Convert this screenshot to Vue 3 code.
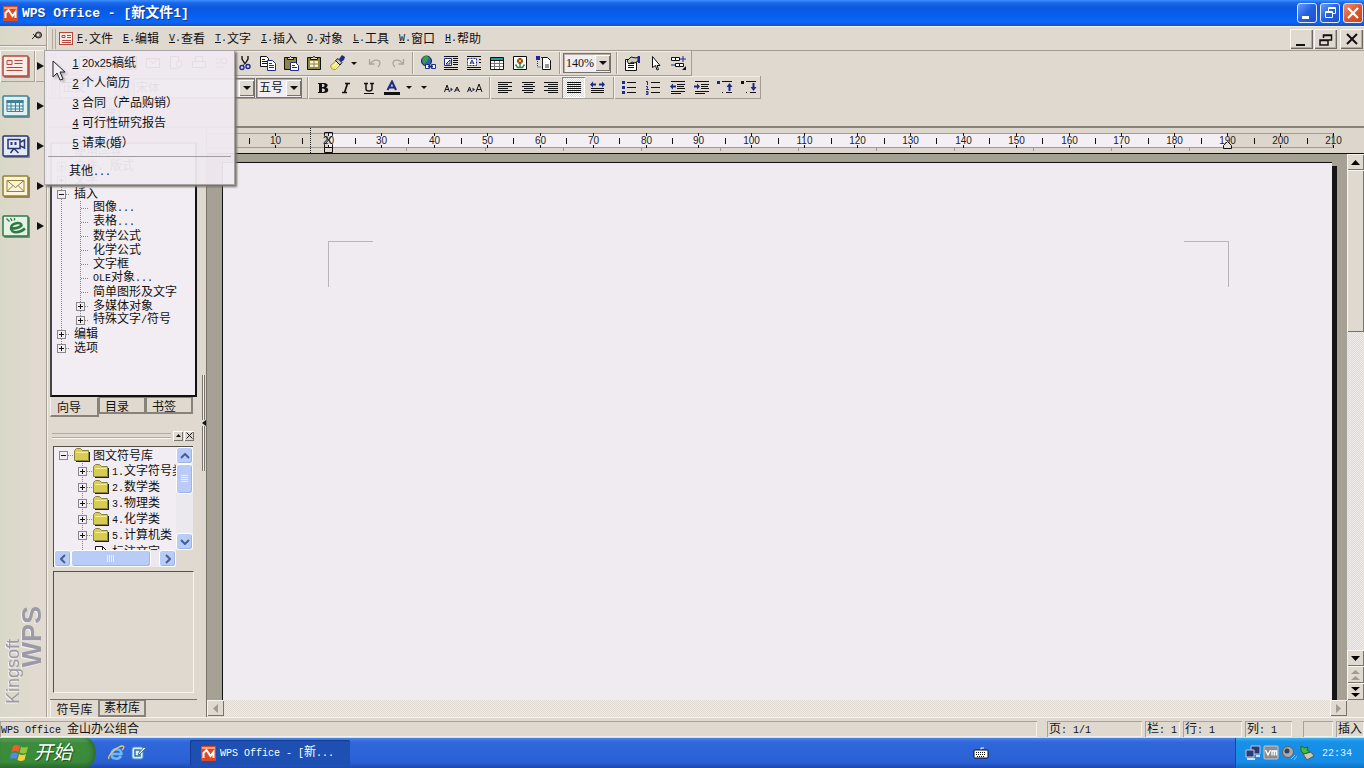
<script setup>
import { h } from 'vue'

// Splits mixed text so that Latin runs get the narrow fixed-width face.
const T = (props) =>
  h(
    'span',
    { class: 'run' },
    (props.s.match(/[\x20-\x7e]+|[^\x20-\x7e]+/g) || []).map((part) =>
      h('span', { class: /^[\x20-\x7e]/.test(part) ? 'lat' : 'han' }, part)
    )
  )
T.props = ['s']

const K = '#111'
const N = '#1c2a8c'
const rows = (list, color = K) =>
  list.map(([x, y, w]) => `<path d="M${x} ${y}.5h${w}" stroke="${color}"/>`).join('')

const icons = {
  doc: `<path d="M3.5 1.5h7l3 3v10h-10z" fill="#fff" stroke="${K}"/>`,
  open: `<path d="M1.5 13.5v-10h5l1 2h6v8z" fill="#d8cf70" stroke="${K}"/>`,
  save: `<path d="M1.5 1.5h13v13h-13z" fill="#777a30" stroke="${K}"/><path d="M4 2h8v5H4z" fill="#fff"/>`,
  mail: `<path d="M1.5 3.5h13v9h-13zl6.500 5 6.500-5" fill="#fff" stroke="${K}"/>`,
  preview: `<path d="M2.500 1.500h8v12h-8z" fill="#fff" stroke="${K}"/><circle cx="11" cy="9" r="3" fill="#fff" stroke="${K}"/>`,
  print: `<path d="M4.500 6.500v-5h7v5M1.500 6.500h13v6h-13z" fill="#ddd" stroke="${K}"/>`,
  find: `<path d="M2 4h5M2 8h4M2 12h8" stroke="${K}"/><circle cx="10" cy="6" r="3" fill="none" stroke="${K}"/>`,
  cut: `<path d="M5 1v3l3 5M11 1v3L8 9" stroke="${K}" fill="none" stroke-width="1.400"/><circle cx="5" cy="12.500" r="2" fill="none" stroke="${N}" stroke-width="1.400"/><circle cx="11" cy="11.500" r="2" fill="none" stroke="${N}" stroke-width="1.400"/><path d="M8 8l-2 3M8 8l2 2" stroke="${N}"/>`,
  copy: `<path d="M.5 1.500h6l2 2v8h-8z" fill="#fff" stroke="${K}"/>${rows([[2, 4, 3], [2, 6, 5], [2, 8, 5]])}<path d="M7.500 5.500h5l3 3v7h-8z" fill="#fff" stroke="${N}"/>${rows([[9, 8, 3], [9, 10, 5], [9, 12, 5]], N)}`,
  paste: `<path d="M1.500 2.500h12v12h-12z" fill="#8d8644" stroke="${K}"/><path d="M4.500 4.500v-2h2l1-1 1 1h2v2z" fill="#e9e3b0" stroke="${K}"/><path d="M7.500 7.500h5l3 3v5h-8z" fill="#fff" stroke="${N}"/>${rows([[9, 10, 3], [9, 12, 5]], N)}`,
  paste2: `<path d="M1.500 2.500h13v12h-13z" fill="#8d8644" stroke="${K}"/><path d="M4.500 4.500v-2h2l1.500-1 1.500 1h2v2z" fill="#e9e3b0" stroke="${K}"/><path d="M4 6h8v6H4z" fill="#f6f1d2"/><path d="M8 6v6M4 9h8" stroke="#8d8644"/>`,
  brush: `<path d="M1.500 10.500l6-5 4 4-5 5q-4 1-5-4z" fill="#f0e86a" stroke="#a39a40"/><path d="M4 12l4-5M6 14l4-5" stroke="#fff"/><path d="M6.500 5.500l2.500-2 4 4-2 2.500z" fill="#c8bfb0" stroke="${K}"/><path d="M10 4l3-4 3 2-1 3-3 2z" fill="${N}"/>`,
  undo: `<path d="M2.500 4v5h5M3 9c3-5 10-5 10-1 0 2-1 3-2 4" fill="none" stroke="#aaa49a" stroke-width="1.300"/>`,
  redo: `<path d="M13.500 4v5h-5M13 9C10 4 3 4 3 8c0 2 1 3 2 4" fill="none" stroke="#aaa49a" stroke-width="1.300"/>`,
  globe: `<circle cx="6.500" cy="6" r="5" fill="#2b62b8" stroke="#123"/><path d="M3 3c2-3 5-2 6 0L7 6 4 9C2 7 2 5 3 3z" fill="#39a048"/><path d="M5.500 9.500h4v4h-4zM11.500 9.500h4v4h-4z" fill="#fff" stroke="${N}"/><path d="M8 11.500h5" stroke="${N}" stroke-width="2"/>`,
  wrapA: `${rows([[1, 1, 14], [10, 3, 5], [10, 5, 5], [10, 7, 5], [10, 9, 5], [1, 12, 14], [1, 14, 14]])}<path d="M1.500 3.500h7v7h-7z" fill="#fff" stroke="${N}"/><path d="M3 9l4-4v4z" fill="none" stroke="${N}"/>`,
  wrapB: `${rows([[1, 12, 14], [1, 14, 14], [1, 1, 14], [13, 4, 2], [13, 7, 2]])}<path d="M1.500 3.500h9v7h-9z" fill="#fff" stroke="${N}" stroke-dasharray="2 1"/><path d="M4 9l2-4 2 4M4.500 8h3" fill="none" stroke="${N}"/>`,
  table: `<path d="M1.500 2.500h13v12h-13z" fill="#fff" stroke="${K}"/><path d="M2 3h12v2H2z" fill="#259a9a"/><path d="M2 8.500h12M2 11.500h12M5.500 6v8M10.500 6v8" stroke="#777"/><path d="M2 5.500h12" stroke="${K}"/>`,
  picture: `<path d="M1.500 1.500h13v13h-13z" fill="#fff" stroke="${K}"/><path d="M8 3v6M5 6h6" stroke="#a04a20" stroke-width="3"/><path d="M7 5h2v2H7z" fill="#f0c040"/><path d="M3.500 9.500l2 3h5l2-3M8 9v4" stroke="#2c8a4a" fill="none" stroke-width="1.500"/>`,
  object: `<path d="M1 1h4v4H1z" fill="${N}"/><path d="M2.500 6v6h4M6 2.500h3" stroke="${N}" stroke-dasharray="1 1" fill="none"/><path d="M7.500 2.500h5l3 3v9h-8z" fill="#fff" stroke="${K}"/><path d="M10 9h4v4h-4z" fill="#999"/>`,
  props: `<path d="M1.500 4.500h11v11h-11z" fill="#fff" stroke="${K}"/>${rows([[4, 8, 6], [4, 10, 6], [4, 12, 6]])}<path d="M3 6l4-4 5 1 2-1v4l-3 2-3-1-3 2z" fill="#cfc9bd" stroke="${K}"/><path d="M14 1h2v7h-2z" fill="${N}"/>`,
  pointer: `<path d="M5.500 1.500v11l3-2 1.500 4.500 1.500-.5-1.500-4h3z" fill="#fff" stroke="${K}"/>`,
  select: `<path d="M1.500 2.500h4v3h-4zM5.500 2.500h4v3h-4zM5.500 8.500h4v3h-4zM9.500 8.500h4v3h-4z" fill="#fff" stroke="${K}"/><path d="M13 1v6M10 4h6M1 10h4" stroke="${N}"/><path d="M12 15h4v-4z" fill="${K}"/>`,
  bold: `<path d="M3 3h6c5 0 4 4 2 4.500 3 .5 3.500 5.500-2 5.500H3v-1h1V4H3zM7 4v3h1c2 0 2-3 0-3zM7 8.500V12h1c2.500 0 2.500-3.500 0-3.500z" fill="${K}" fill-rule="evenodd"/>`,
  italic: `<path d="M7 3.500h5M4 12.500h5M9.500 3.500l-3 9" stroke="${K}" stroke-width="1.700"/>`,
  underline: `<path d="M3 3.500h4M9 3.500h4M5 3v6q0 2 3 2t3-2V3" stroke="${K}" fill="none" stroke-width="1.500"/><path d="M3 13.500h10" stroke="${K}"/>`,
  color: `<path d="M3.500 10L8 1.500l4 8.500M5 7.500h6" stroke="${N}" stroke-width="2" fill="none"/><path d="M0 12h16v3H0z" fill="${K}"/>`,
  spaceA: `<path d="M.5 12l2.500-7 2.500 7M1.500 9.500h3M10.500 12l2.500-5 2.500 5M11.500 10h3" fill="none" stroke="${K}"/><path d="M6.500 7.500v4l2.500-2z" fill="${N}"/>`,
  spaceB: `<path d="M.5 12l2-5 2 5M1.500 10h2M9 12l3-8 3 8M10 9.500h4" fill="none" stroke="${K}"/><path d="M5.500 7.500v4l2.500-2z" fill="${N}"/>`,
  left: rows([[1, 2, 14], [1, 4, 10], [1, 6, 14], [1, 8, 10], [1, 10, 14], [1, 12, 10]]),
  center: rows([[2, 2, 13], [4, 4, 9], [2, 6, 13], [4, 8, 9], [2, 10, 13], [4, 12, 9]]),
  right: rows([[1, 2, 14], [5, 4, 10], [1, 6, 14], [5, 8, 10], [1, 10, 14], [5, 12, 10]]),
  justify: rows([[1, 3, 14], [1, 5, 14], [1, 7, 14], [1, 9, 14], [1, 11, 14], [1, 13, 14]]),
  spread: `${rows([[2, 8, 13], [2, 10, 13], [2, 12, 13]])}<path d="M1 4.500l3-3v2h3v2H4v2zM16 4.500l-3-3v2h-3v2h3v2z" fill="${N}"/>`,
  bullets: `<path d="M1 1h3v3H1zM1 6h3v3H1zM1 11h3v3H1z" fill="${N}"/>${rows([[6, 2, 9], [6, 7, 9], [6, 12, 9]])}`,
  numbers: `<path d="M1 1.500h1.500V5M1 6.500h1.500v1.500l-1 1.500H4M1 11.500h2v3H1M3 13H1" stroke="${N}" fill="none"/>${rows([[6, 2, 9], [6, 7, 9], [6, 12, 9]])}`,
  outdent: `${rows([[2, 1, 14], [8, 4, 8], [8, 6, 7], [8, 8, 8], [2, 11, 14], [2, 13, 10]])}<path d="M1 6.500l3-3v2h3v2H4v2z" fill="${N}"/>`,
  indent: `${rows([[2, 1, 14], [8, 4, 8], [8, 6, 7], [8, 8, 8], [2, 11, 14], [2, 13, 10]])}<path d="M7 6.500l-3-3v2H1v2h3v2z" fill="${N}"/>`,
  raise: `<path d="M0 1h3v3H0z" fill="${N}"/>${rows([[5, 1, 10], [5, 12, 1], [9, 12, 6]])}<path d="M12.500 3l3 4h-2v4h-2V7h-2z" fill="${N}"/>`,
  lower: `<path d="M0 1h3v3H0z" fill="${K}"/>${rows([[5, 1, 10], [5, 12, 1], [9, 12, 6]])}<path d="M12.500 11l3-4h-2V3h-2v4h-2z" fill="${N}"/>`,
}

const menus = ['F文件', 'E编辑', 'V查看', 'T文字', 'I插入', 'O对象', 'L工具', 'W窗口', 'H帮助']
const popup = ['20x25稿纸', '个人简历', '合同（产品购销）', '可行性研究报告', '请柬(婚）']

const bar1 = ['doc', 'open', 'save', 'mail', 'preview', 'print', 'find', 'cut', 'copy', 'paste', 'paste2', 'brush']
const bar1b = ['globe', 'wrapA', 'wrapB', 'table', 'picture', 'object']
const bar1c = ['props', 'pointer', 'select']
const bar2 = ['bold', 'italic', 'underline', 'color']
const bar2b = ['left', 'center', 'right', 'justify', 'spread']
const bar2c = ['bullets', 'numbers', 'outdent', 'indent', 'raise', 'lower']

const modules = [
  { name: '文字', stroke: '#b5483c', fill: '#fbeae6', art: '<path d="M5.500 5.500h5v4h-5zM13 5.500h8M13 8.500h8M5 12.500h16M5 15.500h16" stroke="#b5483c" fill="none"/>' },
  { name: '表格', stroke: '#3d8296', fill: '#e2f0f2', art: '<path d="M5 5h17v3H5z" fill="#3d8296"/><path d="M5.500 5.500h16v11h-16zM5 11h17M5 14h17M9.500 8v8M14 8v8M18 8v8" stroke="#3d8296" fill="none"/>' },
  { name: '演示', stroke: '#27376f', fill: '#e6eaf8', art: '<path d="M6.500 4.500h12v9h-12zM19 7l4-2v8l-4-2M12 14l-3 4M13 14l4 4" fill="none" stroke="#27376f" stroke-width="1.500"/><path d="M9 7h2v3H9zM13 7h2v3h-2z" fill="#27376f"/>' },
  { name: '邮件', stroke: '#98802e', fill: '#fbf3dc', art: '<path d="M5.500 5.500h17v11h-17zl8.500 7 8.500-7M5.500 16.500l6-6M22.500 16.500l-6-6" fill="none" stroke="#98802e"/>' },
  { name: '浏览器', stroke: '#2c7a40', fill: '#e4f3e6', art: '<path d="M10 13.500q7 0 10-3c0-4-10-3-10.500 2.500 0 6 9 5 14 .5" fill="none" stroke="#2c7a40" stroke-width="2.500"/><path d="M5 3.500l3 3M9 3l1.500 3M13 3v2.500" stroke="#2c7a40" stroke-width="1.300"/>' },
]

const guide = [
  { t: '使用向导', d: 0, e: '' },
  { t: '文件、版式', d: 0, e: '+' },
  { t: '文字', d: 0, e: '+' },
  { t: '插入', d: 0, e: '-' },
  { t: '图像...', d: 1, e: '' },
  { t: '表格...', d: 1, e: '' },
  { t: '数学公式', d: 1, e: '' },
  { t: '化学公式', d: 1, e: '' },
  { t: '文字框', d: 1, e: '' },
  { t: 'OLE对象...', d: 1, e: '' },
  { t: '简单图形及文字', d: 1, e: '' },
  { t: '多媒体对象', d: 1, e: '+' },
  { t: '特殊文字/符号', d: 1, e: '+', last: true },
  { t: '编辑', d: 0, e: '+' },
  { t: '选项', d: 0, e: '+', last: true },
]
const symbols = [
  { t: '图文符号库', d: 0, e: '-' },
  { t: '1.文字符号类', d: 1, e: '+' },
  { t: '2.数学类', d: 1, e: '+' },
  { t: '3.物理类', d: 1, e: '+' },
  { t: '4.化学类', d: 1, e: '+' },
  { t: '5.计算机类', d: 1, e: '+' },
  { t: '标注文字', d: 1, e: '', doc: true },
]

// Ruler scale: millimetres to pixels.
const mm = (n) => Math.round(15.6 + n * 5.2875) + 0.5
const majors = Array.from({ length: 21 }, (_, i) => (i + 1) * 10)
const minors = Array.from({ length: 21 }, (_, i) => i * 10 + 5)
const stops = Array.from({ length: 11 }, (_, i) => Math.round(121 + (i + 1) * 78.3) + 0.5)

const status = [
  { t: '页: 1/1', c: 'w95' },
  { t: '栏: 1', c: 'w35' },
  { t: '行: 1', c: 'w59' },
  { t: '列: 1', c: 'w47' },
  { t: '', c: 'w30' },
  { t: '插入', c: 'w28' },
]
</script>

<template>
  <div class="desktop">
    <header class="title">
      <svg class="logo" viewBox="0 0 15 15"><rect width="15" height="15" rx="1" fill="#e04820" /><path d="M1 1h13v2H1z" fill="#f6a080" /><path d="M2.500 12V7l3-3 4 6 3-4v6" fill="none" stroke="#fff" stroke-width="2" /></svg>
      <h1><T s="WPS Office - [新文件1]" /></h1>
      <div class="winbtns">
        <button aria-label="最小化"><svg viewBox="0 0 18 18"><path d="M4 12h7v3H4z" fill="#fff" /></svg></button>
        <button aria-label="还原"><svg viewBox="0 0 18 18"><path d="M7.500 7V3.500h7v6H12M4.500 7.500h7v6h-7zM4 8.500h8M7 4.500h8" fill="none" stroke="#fff" /></svg></button>
        <button class="close" aria-label="关闭"><svg viewBox="0 0 18 18"><path d="M4 4l10 10M14 4L4 14" stroke="#fff" stroke-width="2.200" /></svg></button>
      </div>
    </header>

    <div class="body">
      <aside class="strip">
        <button class="pin" aria-label="固定"><svg viewBox="0 0 12 10"><circle cx="7.500" cy="4" r="3" fill="#8a857c" stroke="#222" /><circle cx="7" cy="4" r="1" fill="#fff" /><path d="M1 8l3-3M2 3l4 4" stroke="#222" /></svg></button>
        <div v-for="(m, i) in modules" :key="m.name" class="module" :class="{ active: i === 0 }">
          <button class="face" :aria-label="m.name">
            <svg viewBox="0 0 28 23"><rect x="2" y="2" width="26" height="21" rx="1" fill="#8b867e" /><rect x="1" y="1" width="25" height="20" rx="1" :fill="m.fill" :stroke="m.stroke" stroke-width="1.500" /><g v-html="m.art" transform="translate(-.5 0)" /></svg>
          </button>
          <button class="more" :aria-label="m.name + '模板'"><svg viewBox="0 0 7 8"><path d="M0 0l7 4-7 4z" fill="#111" /></svg></button>
        </div>
        <div class="brand"><span>Kingsoft</span><b>WPS</b></div>
      </aside>

      <div class="main">
        <nav class="menubar">
          <i class="grip"></i>
          <svg class="docicon" viewBox="0 0 15 14"><rect x=".5" y=".5" width="13" height="12" fill="#fbe9e6" stroke="#b5483c" /><path d="M3 3.500h3v2H3zM8 3.500h4M8 5.500h4M3 8.500h9M3 10.500h9" fill="none" stroke="#b5483c" /></svg>
          <button v-for="m in menus" :key="m"><span class="lat"><u>{{ m[0] }}</u>.</span>{{ m.slice(1) }}</button>
          <div class="mdi">
            <button aria-label="最小化文档"><svg viewBox="0 0 20 18"><path d="M4 14h9v2H4z" fill="#111" /></svg></button>
            <button aria-label="还原文档"><svg viewBox="0 0 20 18"><path d="M7.500 8V5h8v5h-3M4 10h8v5H4zM4 10.500h8M7 5.500h9" fill="none" stroke="#111" stroke-width="1.500" /></svg></button>
            <button class="apart" aria-label="关闭文档"><svg viewBox="0 0 20 18"><path d="M5 4l10 10M15 4L5 14" stroke="#111" stroke-width="2" /></svg></button>
          </div>
        </nav>

        <div class="bars">
          <div class="bar bar1">
            <i class="grip"></i>
            <div class="group first"><button v-for="n in bar1" :key="n" class="tool" :aria-label="n"><svg viewBox="0 0 16 16" v-html="icons[n]"></svg></button></div>
            <button class="drop" aria-label="格式刷选项"></button>
            <i class="gap3"></i>
            <button class="tool" aria-label="撤销"><svg viewBox="0 0 16 16" v-html="icons.undo"></svg></button>
            <button class="tool" aria-label="重做"><svg viewBox="0 0 16 16" v-html="icons.redo"></svg></button>
            <i class="sep"></i>
            <div class="group"><button v-for="n in bar1b" :key="n" class="tool" :aria-label="n"><svg viewBox="0 0 16 16" v-html="icons[n]"></svg></button></div>
            <i class="sep wide"></i>
            <label class="combo zoom"><select aria-label="显示比例"><option>140%</option></select><i></i></label>
            <i class="sep wide"></i>
            <div class="group end"><button v-for="n in bar1c" :key="n" class="tool" :aria-label="n"><svg viewBox="0 0 16 16" v-html="icons[n]"></svg></button></div>
          </div>
          <div class="bar bar2">
            <i class="grip"></i>
            <label class="combo style"><select aria-label="样式"><option>正文</option></select><i></i></label>
            <label class="combo font"><select aria-label="字体"><option>宋体</option></select><i></i></label>
            <label class="combo size"><select aria-label="字号"><option>五号</option></select><i></i></label>
            <i class="sep wide"></i>
            <div class="group"><button v-for="n in bar2" :key="n" class="tool" :aria-label="n"><svg viewBox="0 0 16 16" v-html="icons[n]"></svg></button></div>
            <button class="drop" aria-label="字体颜色"></button>
            <i class="gap3"></i>
            <button class="drop" aria-label="更多效果"></button>
            <i class="gap8"></i>
            <button class="tool" aria-label="字距加宽"><svg viewBox="0 0 16 16" v-html="icons.spaceA"></svg></button>
            <button class="tool" aria-label="字距紧缩"><svg viewBox="0 0 16 16" v-html="icons.spaceB"></svg></button>
            <i class="sep"></i>
            <div class="group"><button v-for="n in bar2b" :key="n" class="tool" :class="{ pressed: n === 'justify' }" :aria-label="n"><svg viewBox="0 0 16 16" v-html="icons[n]"></svg></button></div>
            <i class="sep wide"></i>
            <div class="group last"><button v-for="n in bar2c" :key="n" class="tool" :aria-label="n"><svg viewBox="0 0 16 16" v-html="icons[n]"></svg></button></div>
          </div>
          <div class="filetab"><button><T s="新文件1" /></button></div>
        </div>

        <div class="work">
          <section class="side">
            <div class="tree guide">
              <div v-for="(r, i) in guide" :key="i" class="row">
                <svg v-for="c in r.d + 1" :key="c" class="cell" viewBox="0 0 19 14">
                  <path :d="r.last && c === r.d + 1 ? 'M9.500 0v7' : 'M9.500 0v14'" stroke="#888" stroke-dasharray="1 1" />
                  <template v-if="c === r.d + 1">
                    <path d="M10 7.500h8" stroke="#888" stroke-dasharray="1 1" />
                    <template v-if="r.e"><rect x="5.500" y="3.500" width="8" height="8" fill="#f1edf2" stroke="#888" /><path :d="r.e === '+' ? 'M7 7.500h5M9.500 5v5' : 'M7 7.500h5'" stroke="#111" /></template>
                  </template>
                </svg>
                <T :s="r.t" />
              </div>
            </div>
            <div class="tabs top"><button class="on">向导</button><button>目录</button><button>书签</button></div>
            <div class="dock"><i class="lines"></i><button aria-label="收起"><svg viewBox="0 0 7 7"><path d="M1 5h5L3.500 2z" fill="#111" /></svg></button><button aria-label="关闭面板"><svg viewBox="0 0 7 7"><path d="M.5.500l6 6M6.500.5l-6 6" stroke="#111" /></svg></button></div>
            <div class="symbolbox">
              <div class="tree symbols">
                <div v-for="(r, i) in symbols" :key="i" class="row">
                  <svg v-for="c in r.d + 1" :key="c" class="cell" viewBox="0 0 19 16">
                    <template v-if="c === r.d + 1">
                      <path v-if="c === 2" d="M9.500 0v16" stroke="#888" stroke-dasharray="1 1" />
                      <template v-if="r.e"><path d="M10 8.500h9" stroke="#888" stroke-dasharray="1 1" /><rect x="5.500" y="4.500" width="8" height="8" fill="#f1edf2" stroke="#888" /><path :d="r.e === '+' ? 'M7 8.500h5M9.500 6v5' : 'M7 8.500h5'" stroke="#111" /></template>
                    </template>
                  </svg>
                  <svg class="folder" viewBox="0 0 16 14">
                    <path v-if="r.doc" d="M2.500 2.500h7l4 4v9h-11zM9.500 2.500v4h4" fill="#fff" stroke="#111" />
                    <template v-else><path d="M2 13.500h13.500V4" fill="none" stroke="#222" stroke-width="1.500" /><path d="M.5 12.500v-10l2-2h4l2 2h6v10z" fill="#d9cd50" stroke="#8a8440" /><path d="M2 4.500h12" stroke="#f4eda0" /></template>
                  </svg>
                  <T :s="r.t" />
                </div>
              </div>
              <div class="xpv"><button aria-label="向上"><svg viewBox="0 0 10 6"><path d="M1 5l4-4 4 4" /></svg></button><i class="thumb"></i><button class="end" aria-label="向下"><svg viewBox="0 0 10 6"><path d="M1 1l4 4 4-4" /></svg></button></div>
              <div class="xph"><button aria-label="向左"><svg viewBox="0 0 6 10"><path d="M5 1L1 5l4 4" /></svg></button><i class="thumb"></i><button class="end" aria-label="向右"><svg viewBox="0 0 6 10"><path d="M1 1l4 4-4 4" /></svg></button></div>
            </div>
            <div class="well"></div>
            <div class="tabs bottom"><button class="on">符号库</button><button>素材库</button></div>
          </section>
          <div class="split"><button aria-label="折叠侧栏"><svg viewBox="0 0 4 6"><path d="M4 0v6L0 3z" fill="#111" /></svg></button></div>

          <section class="doc">
            <svg class="ruler">
              <rect x="0" y="4" width="1125" height="16" fill="#dcd6cc" />
              <rect :x="mm(20)" y="5" :width="mm(190) - mm(20)" height="14" fill="#f3eff5" />
              <path d="M0 5.500H1125.500V19.500H0" fill="none" stroke="#a19b90" />
              <path v-for="s in stops" :key="s" :d="`M${s} 20v3`" stroke="#999" />
              <path v-for="n in minors" :key="n" :d="`M${mm(n)} 10v6`" stroke="#111" />
              <path v-for="n in majors" :key="n" :d="`M${mm(n)} 5v3M${mm(n)} 17v3`" stroke="#111" />
              <text v-for="n in majors" :key="'t' + n" :x="mm(n)" y="16">{{ n }}</text>
              <path d="M103.500 0v25" stroke="#222" stroke-dasharray="1 1" />
              <path d="M117.500 4.500h8v3l-8 9v3h8v-3l-8-9zM117.500 19.500h8v5h-8z" fill="none" stroke="#111" />
              <path :d="`M${mm(190) - 4} 20.500h8v-3l-4-4-4 4z`" fill="#e8e2da" stroke="#111" />
            </svg>
            <div class="view">
              <div class="canvas"><div class="page"><i class="mark l"></i><i class="mark r"></i></div></div>
              <div class="vbar">
                <button aria-label="向上滚动"><svg viewBox="0 0 9 5"><path d="M0 5h9L4.500 0z" /></svg></button>
                <i class="thumb"></i><i class="track"></i>
                <button aria-label="向下滚动"><svg viewBox="0 0 9 5"><path d="M0 0h9L4.500 5z" /></svg></button>
                <button class="tall" aria-label="上一页"><svg class="dim" viewBox="0 0 9 10"><path d="M0 4h9L4.500 0zM0 10h9L4.500 6z" /></svg></button>
                <button class="tall" aria-label="下一页"><svg viewBox="0 0 9 10"><path d="M0 0h9L4.500 4zM0 6h9l-4.500 4z" /></svg></button>
              </div>
            </div>
            <div class="hbar">
              <button aria-label="向左滚动"><svg class="dim" viewBox="0 0 5 9"><path d="M5 0v9L0 4.500z" /></svg></button>
              <i class="track"></i>
              <button aria-label="向右滚动"><svg class="dim" viewBox="0 0 5 9"><path d="M0 0v9l5-4.500z" /></svg></button>
            </div>
          </section>
        </div>
      </div>
    </div>

    <footer class="status">
      <div class="msg"><T s="WPS Office 金山办公组合" /></div>
      <div v-for="(s, i) in status" :key="i" class="stat" :class="s.c"><T :s="s.t" /></div>
    </footer>

    <div class="taskbar">
      <button class="start">
        <svg viewBox="0 0 20 18"><path d="M3 2q3-2 7 0L8.500 8Q5 6 1.500 8z" fill="#e8602c" /><path d="M11 2.500q3 2 7 0L16.500 8.500q-3 2-7 0z" fill="#8fc63d" /><path d="M1 9.500q3-2 7 0L6.500 15Q3 13.500 0 15z" fill="#4c8be8" /><path d="M9 10q3 2 7 0l-1.500 6q-4 2-7 0z" fill="#f5cf3c" /></svg>
        <span>开始</span>
      </button>
      <div class="quick">
        <button aria-label="Internet Explorer"><svg viewBox="0 0 17 16"><path d="M4 9h9.500c0-6-9-6.500-10 0-.5 5.500 7 6 9.500 2" fill="none" stroke="#6cb8f8" stroke-width="2.500" /><path d="M1 14C-1 11 9 1 15 1c2 1 0 3-1 4" fill="none" stroke="#f0c860" stroke-width="1.300" /></svg></button>
        <button aria-label="显示桌面"><svg viewBox="0 0 17 16"><rect x="2" y="2" width="11" height="12" rx="2" fill="#d8ecfa" stroke="#4c8fc8" /><path d="M5 5h5v6H5z" fill="none" stroke="#3574ac" stroke-width="1.500" /><path d="M8 9l6-7 1.500 1.500L9 10z" fill="#fff" stroke="#3574ac" /></svg></button>
      </div>
      <button class="task">
        <svg class="logo" viewBox="0 0 15 15"><rect width="15" height="15" rx="1" fill="#e04820" /><path d="M1 1h13v2H1z" fill="#f6a080" /><path d="M2.500 12V7l3-3 4 6 3-4v6" fill="none" stroke="#fff" stroke-width="2" /></svg>
        <T s="WPS Office - [新..." />
      </button>
      <button class="kbd" aria-label="输入法"><svg viewBox="0 0 16 12"><path d="M8 3V1h3" fill="none" stroke="#fff" /><rect x="1" y="3" width="14" height="8" rx="1" fill="#fff" stroke="#111" /><path d="M3 5.500h10M3 7.500h10M4 9.500h8" stroke="#111" stroke-dasharray="1 1" /></svg></button>
      <div class="tray">
        <svg viewBox="0 0 16 16"><path d="M6 1h9v8H6z" fill="#2c3a70" stroke="#b8c8e8" /><path d="M1 5h8v7H1z" fill="#2c3a70" stroke="#b8c8e8" /><path d="M2 14h8M11 11h4" stroke="#d8e0f0" stroke-width="2" /></svg>
        <svg viewBox="0 0 16 16"><rect x="1" y="1" width="14" height="13" rx="1" fill="#8c8c90" stroke="#c8c8cc" /><path d="M2.500 5L5 10l2.500-5M9 10.500V6h4.500v4.500M11.300 6v4.500" fill="none" stroke="#fff" stroke-width="1.400" /></svg>
        <svg viewBox="0 0 16 16"><circle cx="7" cy="7" r="5.500" fill="#a8acb0" stroke="#5a6068" /><circle cx="6" cy="6" r="2.500" fill="#3c4248" /><path d="M10 14l4-4M13 15l3-4" stroke="#8cc4f4" /></svg>
        <svg viewBox="0 0 16 16"><path d="M4 9l8-2 3 4-7 4z" fill="#c8c8c0" stroke="#545850" /><path d="M2 1l4 2 3-1-1 3 3 2-6 2-3-3z" fill="#48b83c" stroke="#1e6c20" /></svg>
        <time><T s="22:34" /></time>
      </div>
    </div>

    <div class="popup" role="menu">
      <button v-for="(p, i) in popup" :key="p" role="menuitem"><u class="lat">{{ i + 1 }}</u><T :s="p" /></button>
      <hr />
      <button class="other" role="menuitem"><T s="其他..." /></button>
    </div>
    <svg class="cursor" viewBox="0 0 14 22"><path d="M1 1v16l4-4 3 7 3-1-3-7h5z" fill="#f2eef4" stroke="#222" /></svg>
  </div>
</template>

<style>
html, body { margin: 0; overflow: hidden; }
.lat { font-family: "Liberation Mono", monospace; font-size: 10px; white-space: pre; }
.run { white-space: nowrap; }
.popup .lat { font-family: "Liberation Sans", sans-serif; font-size: 11px; }
.popup .other .lat { font-family: "Liberation Mono", monospace; font-size: 10px; }
.title .lat { font-size: 13px; }
</style>

<style scoped>
.desktop { position: relative; display: flex; flex-direction: column; height: 100vh; background: #e0d9cf; color: #111; font: 12px/14px "Liberation Sans", "Noto Sans CJK SC", sans-serif; }
button { display: flex; align-items: center; justify-content: center; flex: none; margin: 0; padding: 0; border: 0; background: none; color: inherit; font: inherit; }
svg { display: block; flex: none; }
i { display: block; flex: none; }

.title { display: flex; align-items: center; height: 26px; flex: none; padding: 0 1px 0 3px; box-sizing: border-box; gap: 4px; color: #fff; background: linear-gradient(#3c90ff 0, #1a66e8 3px, #0a58e0 8px, #0862f4 18px, #0a66fa 22px, #1a50b8 26px); }
.logo { width: 15px; height: 15px; }
.title h1 { margin: 0; flex: 1; font: bold 14px/18px "Liberation Sans", "Noto Sans CJK SC", sans-serif; text-shadow: 1px 1px 0 #123a90; }
.winbtns { display: flex; gap: 3px; }
.winbtns button { width: 20px; height: 20px; border: 1px solid #e0e8ff; border-radius: 3px; background: linear-gradient(135deg, #6a9cf8, #2460e0 50%, #1c50d0); }
.winbtns .close { background: linear-gradient(135deg, #f09070, #dc5830 50%, #c84418); }
.winbtns svg { width: 18px; height: 18px; }

.body { display: flex; flex: 1; min-height: 0; }
.strip { display: flex; flex-direction: column; width: 47px; flex: none; box-sizing: border-box; padding-bottom: 13px; border-right: 1px solid #a39d93; background: linear-gradient(90deg, #d9d8c8, #e2dad1); }
.pin { height: 20px; justify-content: flex-end; padding-right: 3px; border-bottom: 1px solid #a39d93; box-shadow: 0 1px #f4f0ea; margin-bottom: 4px; }
.pin svg { width: 12px; height: 10px; }
.module { display: flex; height: 32px; margin-bottom: 8px; align-items: stretch; }
.face { width: 35px; padding-right: 3px; box-sizing: border-box; }
.face svg { width: 28px; height: 23px; }
.more { width: 10px; }
.more svg { width: 7px; height: 8px; }
.active .face, .active .more { box-shadow: inset 1px 1px #f6f2ee, inset -1px -1px #a8a298; }
.brand { display: flex; align-items: flex-end; margin-top: auto; padding-left: 4px; color: #9c9aa4; text-shadow: -1px -1px #f4f0f4; }
.brand span, .brand b { writing-mode: vertical-rl; transform: rotate(180deg); white-space: nowrap; }
.brand span { font: 18px/19px "Liberation Sans", sans-serif; }
.brand b { font: bold 27px/19px "Liberation Sans", sans-serif; margin-bottom: 36px; }

.main { display: flex; flex-direction: column; flex: 1; min-width: 0; border-left: 1px solid #f4f0ea; }
.menubar { display: flex; align-items: center; flex: none; border-bottom: 1px solid #a39d93; border-top: 1px solid #f4f0ea; box-sizing: border-box; height: 25px; }
.grip { width: 2px; height: 20px; margin: 0 3px 0 4px; border: solid #b0aaa0; border-width: 0 1px; }
.docicon { width: 15px; height: 14px; margin-right: 3px; }
.menubar > button { width: 46px; justify-content: flex-start; }
.menubar > button .lat { width: 12px; }
.mdi { display: flex; margin-left: auto; padding-right: 1px; gap: 1px; }
.mdi button { width: 23px; height: 20px; box-shadow: inset 1px 1px #fbf8f4, inset -1px -1px #6e6a62, inset -2px -2px #b0aaa0; }
.mdi .apart { margin-left: 2px; }
.mdi svg { width: 20px; height: 18px; }

.bars { display: flex; flex-direction: column; align-items: flex-start; height: 77px; flex: none; border-bottom: 2px solid #88837a; box-sizing: border-box; }
.bar { display: flex; align-items: center; height: 25px; flex: none; box-sizing: border-box; border: solid #a39d93; border-width: 0 1px 1px 0; box-shadow: inset 0 1px #f2eee8; }
.bar2 { height: 23px; padding-top: 1px; }
.group { display: flex; }
.bar1 .first { padding-left: 13px; }
.bar1 .end { padding-right: 2px; }
.bar2 .last { gap: 1px; }
.tool { width: 23px; height: 22px; }
.tool svg { width: 16px; height: 16px; }
.pressed { background: repeating-conic-gradient(#fff 0 25%, #ddd6cc 0 50%) 0 0 / 2px 2px; box-shadow: inset 1px 1px #8d887f, inset -1px -1px #fff; height: 21px; }
.drop { width: 12px; height: 20px; }
.drop::after { content: ""; border: 3px solid transparent; border-top-color: #111; border-bottom: 0; }
.gap3 { width: 3px; }
.gap8 { width: 10px; }
.sep { width: 3px; height: 22px; margin: 0 0 0 3px; border-left: 1px solid #a39d93; box-shadow: inset 1px 0 #f4f0ea; }
.sep.wide { margin-left: 5px; }
.combo { display: flex; position: relative; box-sizing: border-box; height: 20px; border: 1px solid #77726a; background: #f1edf2; box-shadow: inset 1px 1px #b5afa5; }
.combo select { appearance: none; width: 100%; border: 0; padding: 0 0 0 2px; background: none; color: #111; font: 12px/18px "Liberation Sans", "Noto Sans CJK SC", sans-serif; }
.combo i { position: absolute; right: 0; top: 1px; width: 15px; height: 16px; pointer-events: none; background: #e0d9cf; box-shadow: inset 1px 1px #fff, inset -1px -1px #77726a; }
.combo i::after { content: ""; position: absolute; left: 4px; top: 6px; border: 4px solid transparent; border-top-color: #111; border-bottom: 0; }
.zoom { width: 48px; }
.zoom select { font: 12px/18px "Liberation Serif", serif; }
.style { width: 70px; margin-right: 4px; }
.font { width: 122px; margin-right: 1px; }
.size { width: 46px; }
.filetab { padding: 6px 0 0 24px; }
.filetab button { padding: 1px 8px; }

.work { display: flex; flex: 1; min-height: 0; }
.side { display: flex; flex-direction: column; width: 147px; flex: none; padding: 14px 0 0 2px; }
.tree { overflow: hidden; background: #f1edf2; }
.guide { flex: 1; min-height: 0; padding-top: 1px; border: 2px solid; border-color: #77726a #111 #111 #444; }
.row { display: flex; align-items: center; height: 14px; white-space: nowrap; }
.cell { width: 19px; }
.guide .cell { height: 14px; }
.symbols .cell { height: 16px; }
.row .run { padding-left: 3px; }
.symbols .run { padding-top: 2px; }
.tabs { display: flex; flex: none; align-items: flex-start; height: 20px; }
.tabs button { width: 47px; height: 17px; box-sizing: border-box; border: solid #88837a; border-width: 1px 2px 2px 1px; }
.tabs .on { width: 49px; height: 20px; border-color: transparent #88837a #88837a #f4f0ea; }
.tabs.top button { padding: 3px 10px 0 0; }
.dock { display: flex; align-items: center; gap: 1px; height: 11px; margin: 13px 3px 5px 2px; flex: none; }
.dock .lines { flex: 1; height: 3px; border: solid #b0aaa0; border-width: 1px 0; box-shadow: 0 1px #f8f4ee; margin-right: 1px; }
.dock button { width: 10px; height: 10px; box-shadow: inset 1px 1px #fff, inset -1px -1px #77726a; }
.dock svg { width: 7px; height: 7px; }
.symbolbox { display: grid; grid-template-columns: 1fr 17px; grid-template-rows: 103px 17px; height: 120px; margin: 0 4px 0 3px; flex: none; border-left: 1px solid #55524c; border-top: 1px solid #55524c; }
.symbols .row { height: 16px; }
.folder { width: 16px; height: 14px; margin-left: 1px; }
.xpv, .xph { display: flex; background: #ece9ee; }
.xpv { flex-direction: column; }
.xpv button, .xph button, .xpv .thumb, .xph .thumb { box-sizing: border-box; border: 1px solid #fff; border-radius: 3px; background: #b9ccf8; box-shadow: inset -1px -1px #9cb4e8; }
.xpv button, .xph button { width: 17px; height: 17px; }
.xpv .thumb { height: 30px; background: repeating-linear-gradient(#e8f0ff 0 1px, transparent 1px 2px) 50% 50% / 7px 8px no-repeat #b9ccf8; }
.xph .thumb { width: 80px; background: repeating-linear-gradient(90deg, #e8f0ff 0 1px, transparent 1px 2px) 50% 50% / 8px 7px no-repeat #b9ccf8; }
.xpv .end { margin-top: auto; }
.xph .end { margin-left: auto; }
.xpv path, .xph path { fill: none; stroke: #42609c; stroke-width: 2; }
.xpv svg { width: 10px; height: 6px; }
.xph svg { width: 6px; height: 10px; }
.well { height: 120px; flex: none; margin: 4px 3px 6px; border: 1px solid; border-color: #55524c #f8f4f0 #f8f4f0 #55524c; }
.tabs.bottom { height: 17px; border-top: 1px solid #77726a; }
.tabs.bottom .on { height: 17px; padding: 3px 0 0; border-width: 0 1px; }
.split { display: flex; align-items: center; justify-content: flex-end; width: 10px; flex: none; padding-right: 1px; border-right: 1px solid #77726a; box-sizing: border-box; }
.split button { width: 3px; height: 96px; border: solid #77726a; border-width: 0 1px; background: #f4f0ea; }
.split svg { width: 4px; height: 6px; background: #e0d9cf; }

.doc { display: flex; flex-direction: column; flex: 1; min-width: 0; }
.ruler { width: 100%; height: 26px; margin: 0; box-sizing: border-box; border-bottom: 1px solid #111; background: #dcd6cc; overflow: hidden; }
.ruler text { font: 10px "Liberation Sans", sans-serif; text-anchor: middle; fill: #222; }
.view { display: flex; flex: 1; min-height: 0; }
.canvas { flex: 1; min-width: 0; display: flex; overflow: hidden; background: #a5a195; }
.page { display: flex; justify-content: space-between; flex: 1; margin: 8px 15px 0; padding: 78px 103px 0 105px; border: solid #111; border-width: 1px 0 0 1px; background: #efebf0; box-shadow: 5px 4px #151515; }
.mark { width: 44px; height: 45px; border-top: 1px solid #b8b4ba; }
.mark.l { border-left: 1px solid #b8b4ba; }
.mark.r { border-right: 1px solid #b8b4ba; }
.vbar { display: flex; flex-direction: column; width: 17px; flex: none; }
.vbar button, .vbar .thumb, .hbar button { width: 17px; height: 16px; background: #e0d9cf; box-shadow: inset 1px 1px #f8f5f0, inset -1px -1px #77726a; }
.vbar .thumb { height: 162px; }
.vbar .tall { height: 17px; }
.vbar svg { width: 9px; }
.dim { fill: #a19b92; }
.track { flex: 1; background: repeating-conic-gradient(#f0ecea 0 25%, #dfd9d1 0 50%) 0 0 / 2px 2px; }
.hbar { display: flex; height: 17px; flex: none; margin-right: 17px; }
.hbar svg { width: 5px; height: 9px; }

.status { display: flex; align-items: stretch; height: 21px; flex: none; box-sizing: border-box; padding: 3px 0 1px; border-top: 1px solid #f6f2ec; gap: 3px; }
.msg { flex: 1; margin-right: 7px; }
.msg, .stat { box-sizing: border-box; padding: 1px 0 0 1px; line-height: 15px; overflow: hidden; box-shadow: inset 1px 1px #a8a298, inset -1px -1px #f4f0ea; }
.w95 { width: 95px; }
.w35 { width: 35px; }
.w59 { width: 59px; }
.w47 { width: 47px; margin-right: 8px; }
.w30 { width: 30px; }
.w28 { width: 28px; }
.stat { padding-left: 2px; flex: none; }

.taskbar { display: flex; height: 30px; flex: none; background: linear-gradient(#4a88ec 0, #3068dc 4px, #2a60d4 24px, #1c48b0 30px); color: #fff; }
.start { width: 96px; gap: 4px; justify-content: flex-start; padding-left: 10px; box-sizing: border-box; border-radius: 0 10px 12px 0 / 0 15px 15px 0; background: linear-gradient(#6cae68 0, #3c8c3c 5px, #3a8a3a 24px, #2a6a2c 30px); box-shadow: inset -3px 0 4px #2c6c34; }
.start svg { width: 20px; height: 18px; }
.start span { font: italic 19px/24px "Liberation Sans", "Noto Sans CJK SC", sans-serif; text-shadow: 1px 1px 1px #1c4c1c; }
.quick { display: flex; align-items: center; gap: 5px; width: 82px; padding-left: 12px; }
.quick svg { width: 17px; height: 16px; }
.task { width: 160px; height: 26px; margin-top: 2px; justify-content: flex-start; gap: 4px; padding-left: 11px; box-sizing: border-box; border-radius: 2px; background: #1e50b4; box-shadow: inset 1px 1px 1px #143c90; }
.kbd { margin-left: auto; margin-right: 246px; }
.kbd svg { width: 16px; height: 12px; }
.tray { display: flex; align-items: center; gap: 2px; width: 129px; box-sizing: border-box; padding-left: 9px; border-left: 1px solid #0c4cae; background: linear-gradient(#3ab0f4 0, #1890e8 4px, #168ce4 24px, #1070c4 30px); }
.tray svg { width: 16px; height: 16px; }
.tray time { margin-left: 5px; color: #dff2ff; }

.popup { position: absolute; left: 44px; top: 50px; width: 191px; box-sizing: border-box; padding: 2px 3px; border: 1px solid #a8a4a4; background: rgba(239, 234, 240, .95); box-shadow: 2px 2px 2px #77726a; }
.popup button { width: 100%; height: 20px; justify-content: flex-start; padding-left: 21px; }
.popup u { width: 13px; flex: none; }
.popup hr { margin: 3px 0 5px; border: 0; border-top: 1px solid #a29ea0; }
.cursor { position: absolute; left: 52px; top: 60px; width: 14px; height: 22px; filter: drop-shadow(2px 2px 1px #8888); }
</style>
